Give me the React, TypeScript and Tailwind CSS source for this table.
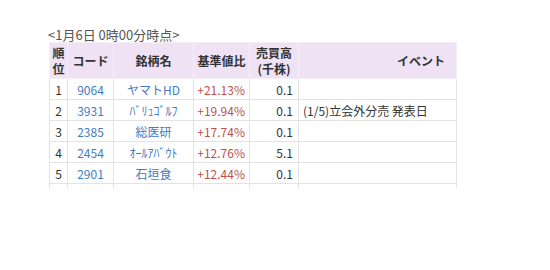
const rows = [
  { rank: 1, code: "9064", name: "ヤマトHD", pct: "+21.13%", vol: "0.1", event: "" },
  { rank: 2, code: "3931", name: "ﾊﾞﾘｭｺﾞﾙﾌ", pct: "+19.94%", vol: "0.1", event: "(1/5)立会外分売 発表日" },
  { rank: 3, code: "2385", name: "総医研", pct: "+17.74%", vol: "0.1", event: "" },
  { rank: 4, code: "2454", name: "ｵｰﾙｱﾊﾞｳﾄ", pct: "+12.76%", vol: "5.1", event: "" },
  { rank: 5, code: "2901", name: "石垣食", pct: "+12.44%", vol: "0.1", event: "" },
];

const th = "border border-[#f4eff7] font-bold text-[12px] leading-[16px] text-[#333]";
const td = "border border-[#e3e3e3] h-[21px] p-0 text-[12px] leading-[15px]";

export default function App() {
  return (
    <div
      className="w-[550px] h-[270px] bg-white overflow-hidden pl-[49px] pt-[27px]"
      style={{ fontFamily: '"Noto Sans CJK JP", "Noto Sans", sans-serif' }}
    >
      <div className="text-[13px] leading-[15px] text-[#555] h-[15px] -ml-[1px]">&lt;1月6日 0時00分時点&gt;</div>
      <div className="h-[146px] overflow-hidden">
        <table className="table-fixed border-collapse w-[407px] text-[#333]">
          <colgroup>
            <col className="w-[18px]" />
            <col className="w-[46px]" />
            <col className="w-[80px]" />
            <col className="w-[56px]" />
            <col className="w-[49px]" />
            <col className="w-[158px]" />
          </colgroup>
          <thead>
            <tr className="bg-[#eee2f4] h-[36px]">
              <th className={`${th} text-center px-0`}>順<br />位</th>
              <th className={`${th} text-center`}>コード</th>
              <th className={`${th} text-center`}>銘柄名</th>
              <th className={`${th} text-center`}>基準値比</th>
              <th className={`${th} text-center`}>売買高<br />(千株)</th>
              <th className={`${th} text-right pr-[11px]`}>イベント</th>
            </tr>
          </thead>
          <tbody>
            {rows.map((r) => (
              <tr key={r.rank}>
                <td className={`${td} text-center`}>{r.rank}</td>
                <td className={`${td} text-center text-[#3f7cc4]`}>{r.code}</td>
                <td className={`${td} text-center text-[#3f7cc4]`}>{r.name}</td>
                <td className={`${td} text-right pr-[4px] text-[#c0504d]`}>{r.pct}</td>
                <td className={`${td} text-right pr-[5px]`}>{r.vol}</td>
                <td className={`${td} text-left pl-[4px]`}>{r.event}</td>
              </tr>
            ))}
            <tr>
              <td className={td}></td>
              <td className={td}></td>
              <td className={td}></td>
              <td className={td}></td>
              <td className={td}></td>
              <td className={td}></td>
            </tr>
          </tbody>
        </table>
      </div>
    </div>
  );
}
